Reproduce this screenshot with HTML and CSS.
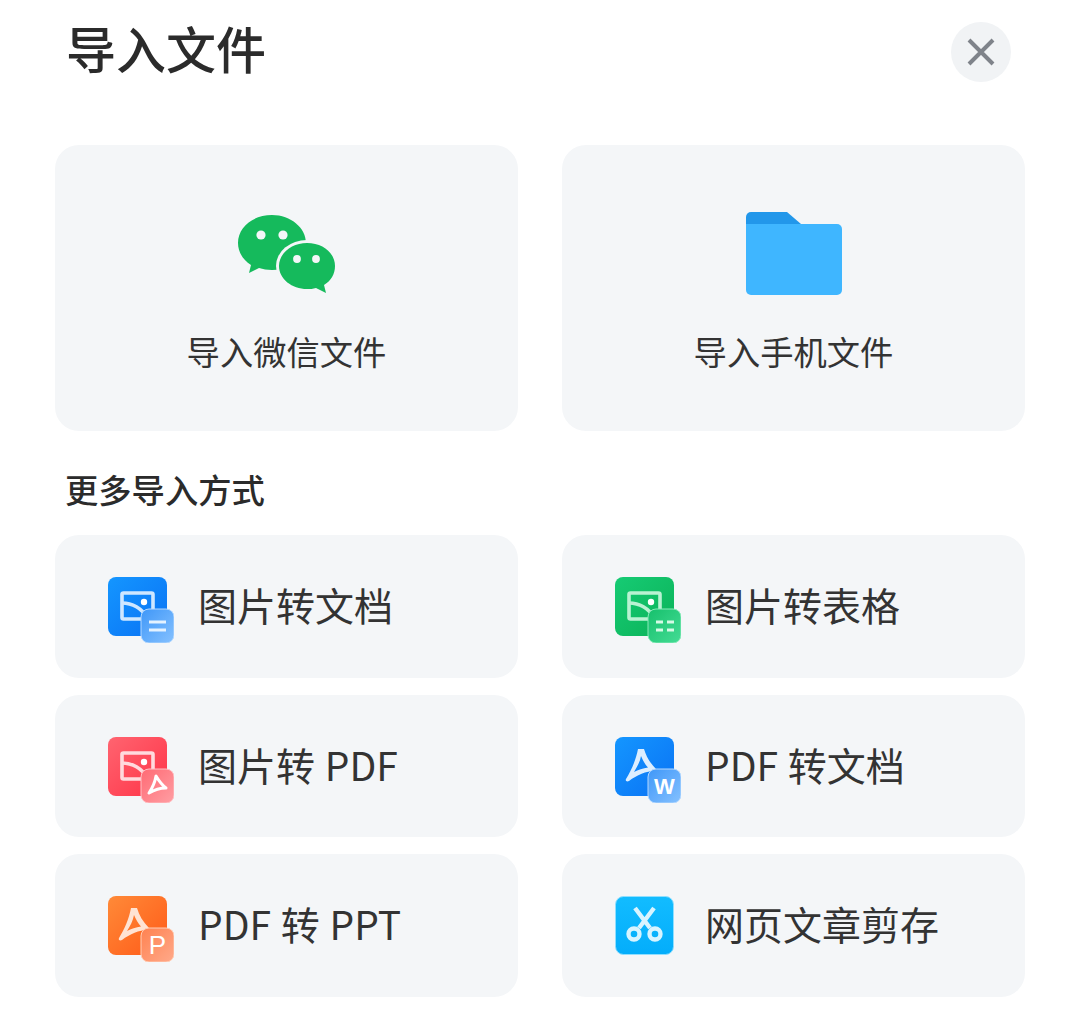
FILE: index.html
```html
<!DOCTYPE html>
<html lang="zh-CN">
<head>
  <meta charset="utf-8">
  <title>导入文件</title>
  <link rel="stylesheet" href="styles.css">
</head>
<body>

<svg class="defs" width="0" height="0">
  <defs>
    <linearGradient id="gBlue" x1="0" y1="0" x2="1" y2="1"><stop offset="0" stop-color="#1496ff"/><stop offset="1" stop-color="#0a72f4"/></linearGradient>
    <linearGradient id="gGreen" x1="0" y1="0" x2="1" y2="1"><stop offset="0" stop-color="#16cb74"/><stop offset="1" stop-color="#0bb258"/></linearGradient>
    <linearGradient id="gRed" x1="0" y1="0" x2="1" y2="1"><stop offset="0" stop-color="#ff6470"/><stop offset="1" stop-color="#ff3347"/></linearGradient>
    <linearGradient id="gOrange" x1="0" y1="0" x2="1" y2="1"><stop offset="0" stop-color="#ff8a38"/><stop offset="1" stop-color="#ff5a18"/></linearGradient>
    <linearGradient id="gCyan" x1="0" y1="0" x2="0" y2="1"><stop offset="0" stop-color="#12bcff"/><stop offset="1" stop-color="#04adfb"/></linearGradient>
    <linearGradient id="bBlue" x1="0" y1="0" x2="1" y2="1"><stop offset="0" stop-color="#3f97f8"/><stop offset="1" stop-color="#85c1ff"/></linearGradient>
    <linearGradient id="bGreen" x1="0" y1="0" x2="1" y2="1"><stop offset="0" stop-color="#16c06c"/><stop offset="1" stop-color="#45dc95"/></linearGradient>
    <linearGradient id="bRed" x1="0" y1="0" x2="1" y2="1"><stop offset="0" stop-color="#ff6a74"/><stop offset="1" stop-color="#ff9ea3"/></linearGradient>
    <linearGradient id="bOrange" x1="0" y1="0" x2="1" y2="1"><stop offset="0" stop-color="#ff8250"/><stop offset="1" stop-color="#ffa98a"/></linearGradient>
    <g id="pic" fill="none" stroke-width="3.6">
      <rect x="14" y="16" width="31" height="26" rx="1.5"/>
      <path d="M14 26c10 0 20 5 25 15"/>
      <circle cx="36" cy="25" r="3.2" fill="#fff" stroke="none"/>
    </g>
    <path id="pdfA" fill-rule="evenodd" d="M23 12h6c2 7 6 14 12 20l-1 2c-9 0-18 4-26 10-2 1-4 0-3-2 5-8 10-19 12-30zM26 19c-1 6-4 11-7 16 4-2 9-4 14-4.500-3-3-5-7-7-11.500z"/>
  </defs>
</svg>

<div class="head">
  <h1 class="title">导入文件</h1>
  <button class="close" type="button" aria-label="关闭">
    <svg width="28" height="28" viewBox="0 0 28 28"><path d="M2 2l24 24M26 2L2 26"/></svg>
  </button>
</div>

<div class="bigs">
  <div class="big">
    <svg class="bigicon" width="100" height="85" viewBox="-1 -1 100 85">
      <path fill="#15ba5c" d="M34 2C15 2 0 14 0 30c0 9 5 17 13 22l-2 8 10-5c4 1 8 2 13 2 19 0 34-12 34-27S53 2 34 2z"/>
      <ellipse cx="69" cy="53" rx="31" ry="26" fill="#f4f6f8"/>
      <path fill="#15ba5c" d="M69 30c-15 0-28 10-28 23s13 23 28 23c3 0 6 0 9-1l10 5-2-8c7-4 11-11 11-19 0-13-12-23-28-23z"/>
      <circle cx="23" cy="22" r="4.600" fill="#f4f6f8"/>
      <circle cx="45" cy="22" r="4.600" fill="#f4f6f8"/>
      <circle cx="59" cy="46" r="3.900" fill="#f4f6f8"/>
      <circle cx="78" cy="46" r="3.900" fill="#f4f6f8"/>
    </svg>
    <div class="biglabel">导入微信文件</div>
  </div>
  <div class="big">
    <svg class="bigicon" width="96" height="85" viewBox="0 0 96 85">
      <path fill="#3fb6ff" d="M0 12h91a5 5 0 0 1 5 5v61a5 5 0 0 1-5 5H5a5 5 0 0 1-5-5z"/>
      <path fill="#2297ea" d="M0 5a5 5 0 0 1 5-5h36l14 12H0z"/>
    </svg>
    <div class="biglabel">导入手机文件</div>
  </div>
</div>

<h2 class="subtitle">更多导入方式</h2>

<div class="rows">
  <div class="row">
    <svg class="icon" width="66" height="74" viewBox="0 -8 66 74">
      <rect width="59" height="59" rx="8" fill="url(#gBlue)"/>
      <use href="#pic" stroke="#cfe7ff"/>
      <rect x="33" y="32" width="33" height="34" rx="8" fill="url(#bBlue)" stroke="#b4d8ff"/>
      <path d="M41 45h17M41 53h17" stroke="#e4f2ff" stroke-width="3.200"/>
    </svg>
    <span class="label">图片转文档</span>
  </div>
  <div class="row">
    <svg class="icon" width="66" height="74" viewBox="0 -8 66 74">
      <rect width="59" height="59" rx="8" fill="url(#gGreen)"/>
      <use href="#pic" stroke="#b9f2d2"/>
      <rect x="33" y="32" width="33" height="34" rx="8" fill="url(#bGreen)" stroke="#8aeaba"/>
      <path d="M41 45h7M52 45h7M41 53h7M52 53h7" stroke="#d6fae6" stroke-width="3.200"/>
    </svg>
    <span class="label">图片转表格</span>
  </div>
  <div class="row">
    <svg class="icon" width="66" height="74" viewBox="0 -8 66 74">
      <rect width="59" height="59" rx="8" fill="url(#gRed)"/>
      <use href="#pic" stroke="#ffdade"/>
      <rect x="33" y="32" width="33" height="34" rx="8" fill="url(#bRed)" stroke="#ffc0c4"/>
      <path d="M48 39c-1 6-3 11-7 17 5-3 11-5 17-5-4-3-7-7-10-12z" fill="none" stroke="#fff" stroke-width="3" stroke-linejoin="round"/>
    </svg>
    <span class="label">图片转 PDF</span>
  </div>
  <div class="row">
    <svg class="icon" width="66" height="74" viewBox="0 -8 66 74">
      <rect width="59" height="59" rx="8" fill="url(#gBlue)"/>
      <use href="#pdfA" fill="#dceeff"/>
      <rect x="33" y="32" width="33" height="34" rx="8" fill="url(#bBlue)" stroke="#b4d8ff"/>
      <text x="49.500" y="57" class="badgew">W</text>
    </svg>
    <span class="label">PDF 转文档</span>
  </div>
  <div class="row">
    <svg class="icon" width="66" height="74" viewBox="0 -8 66 74">
      <rect width="59" height="59" rx="8" fill="url(#gOrange)"/>
      <use href="#pdfA" fill="#ffe3d3"/>
      <rect x="33" y="32" width="33" height="34" rx="8" fill="url(#bOrange)" stroke="#ffcdb5"/>
      <text x="49.500" y="58" class="badgep">P</text>
    </svg>
    <span class="label">PDF 转 PPT</span>
  </div>
  <div class="row">
    <svg class="icon" width="66" height="74" viewBox="0 -8 66 74">
      <rect x=".5" y=".5" width="58" height="58" rx="8" fill="url(#gCyan)" stroke="#8fdfff"/>
      <g fill="none" stroke="#d8f4ff" stroke-width="4.400">
        <path d="M20 12l15 20M39 12L24 32"/>
        <circle cx="19" cy="38" r="5.500"/>
        <circle cx="40" cy="38" r="5.500"/>
      </g>
    </svg>
    <span class="label">网页文章剪存</span>
  </div>
</div>

</body>
</html>
```

FILE: styles.css
```css
body {
  margin: 0;
  padding: 0 55px;
  background: #fff;
  color: #333;
  font-family: "Noto Sans CJK SC", "Noto Sans", sans-serif;
}
.defs {
  position: absolute;
}
.head {
  display: flex;
  align-items: center;
  justify-content: space-between;
  height: 103px;
  margin-bottom: 42px;
  padding: 0 14px 0 11px;
}
.title {
  margin: 0 0 10px;
  font-size: 50px;
  font-weight: 500;
  line-height: 60px;
  color: #2b2b2b;
}
.close {
  display: flex;
  align-items: center;
  justify-content: center;
  width: 60px;
  height: 60px;
  padding: 0;
  border: 0;
  border-radius: 50%;
  background: #f1f3f5;
}
.close path {
  fill: none;
  stroke: #7f838a;
  stroke-width: 4;
}
.bigs {
  display: grid;
  grid-template-columns: 1fr 1fr;
  gap: 44px;
}
.big {
  display: flex;
  flex-direction: column;
  align-items: center;
  height: 286px;
  padding-top: 67px;
  box-sizing: border-box;
  border-radius: 24px;
  background: #f4f6f8;
}
.biglabel {
  margin-top: 29px;
  font-size: 33.3px;
  line-height: 50px;
}
.subtitle {
  margin: 0;
  padding: 34px 10px 22px;
  font-size: 33.3px;
  font-weight: 500;
  line-height: 48px;
  color: #2b2b2b;
}
.rows {
  display: grid;
  grid-template-columns: 1fr 1fr;
  grid-auto-rows: 142.5px;
  gap: 17px 44px;
}
.row {
  display: flex;
  align-items: center;
  padding-left: 53px;
  border-radius: 24px;
  background: #f4f6f8;
}
.icon {
  flex: none;
  margin-right: 24px;
}
.label {
  margin-bottom: 4px;
  font-size: 39px;
  line-height: 50px;
  word-spacing: 1px;
}
.badgew,
.badgep {
  fill: #fff;
  font-family: "Liberation Sans", sans-serif;
  text-anchor: middle;
}
.badgew {
  font-size: 22px;
  font-weight: 700;
}
.badgep {
  font-size: 26px;
}
```
